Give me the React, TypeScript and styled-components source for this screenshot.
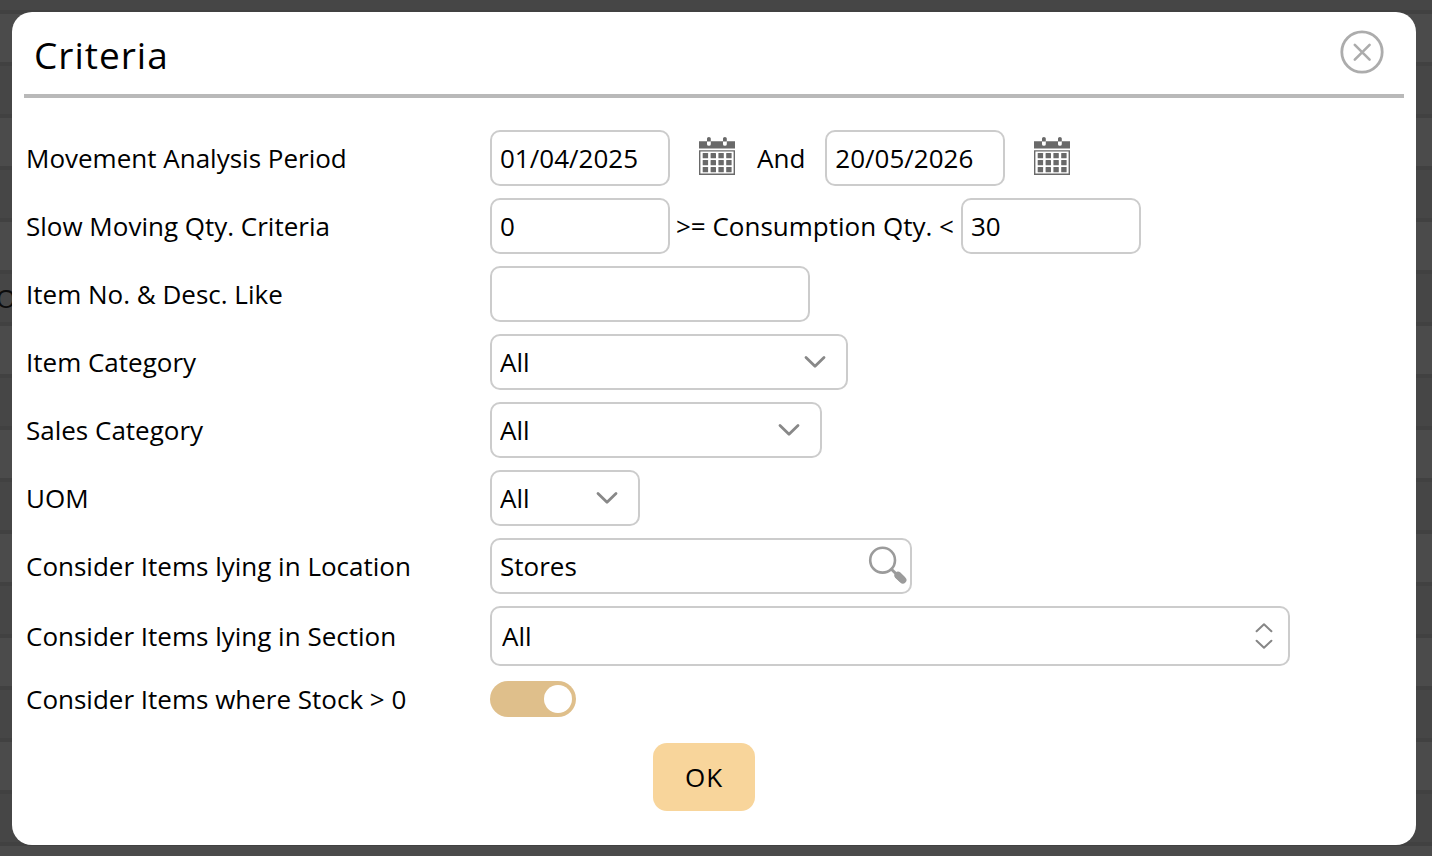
import React from "react";
import styled, { createGlobalStyle } from "styled-components";

const GlobalStyle = createGlobalStyle`
  *, *::before, *::after { box-sizing: border-box; }
  body {
    margin: 0;
    background: #464646;
    color: #000;
    font-family: "Open Sans", sans-serif;
    font-size: 26px;
    line-height: 36px;
  }
  input, select, button {
    font: inherit;
    color: inherit;
    margin: 0;
  }
`;

const Page = styled.div`
  position: relative;
  min-height: 100vh;
  padding: 12px 16px 11px 12px;
`;

const Backdrop = styled.div`
  position: absolute;
  inset: 0;
  overflow: hidden;
`;

const BackdropRow = styled.div`
  height: 52px;
  padding-top: 6px;
  border-bottom: 4px solid #414141;
  background: #464646;
  color: #0c0c0c;
  &:nth-child(even) { background: #4b4b4b; }
  &:first-child { height: 14px; }
`;

const ClippedText = styled.span`
  margin-left: -4px;
`;

const Dialog = styled.section`
  position: relative;
  padding: 0 12px 34px;
  border-radius: 20px;
  background: #fff;
`;

const Header = styled.header`
  display: flex;
  align-items: flex-start;
  justify-content: space-between;
  height: 86px;
  padding: 18px 20px 0 10px;
  border-bottom: 4px solid #b9b9b9;
`;

const Title = styled.h1`
  margin: 0;
  font-size: 37px;
  font-weight: 400;
  line-height: 50px;
  letter-spacing: 1px;
`;

const IconButton = styled.button`
  display: flex;
  padding: 0;
  border: 0;
  background: none;
  cursor: pointer;
`;

const Form = styled.form`
  padding: 32px 22px 0 2px;
`;

const Row = styled.div<{ $height?: number }>`
  display: grid;
  grid-template-columns: 464px 1fr;
  align-items: center;
  min-height: ${(p) => p.$height ?? 56}px;
  margin-bottom: 12px;
`;

const Fields = styled.div`
  display: flex;
  align-items: center;
`;

const TextInput = styled.input<{ $width: number }>`
  width: ${(p) => p.$width}px;
  height: 56px;
  padding: 0 8px;
  border: 2px solid #ccc;
  border-radius: 10px;
  background: #fff;
`;

const DateGroup = styled.div`
  display: flex;
  align-items: center;
  gap: 28px;
`;

const Conjunction = styled.label`
  padding: 0 20px 0 21px;
`;

const Comparison = styled.label`
  padding: 0 7px 0 6px;
`;

const Control = styled.div<{ $width: number; $height?: number }>`
  position: relative;
  width: ${(p) => p.$width}px;
  height: ${(p) => p.$height ?? 56}px;
`;

const Select = styled.select<{ $inset?: number }>`
  appearance: none;
  width: 100%;
  height: 100%;
  padding: 0 56px 0 ${(p) => p.$inset ?? 8}px;
  border: 2px solid #ccc;
  border-radius: 10px;
  background: #fff;
`;

const ControlIcon = styled.span<{ $right: number }>`
  position: absolute;
  top: 0;
  bottom: 0;
  right: ${(p) => p.$right}px;
  display: flex;
  align-items: center;
  pointer-events: none;
`;

const SearchButton = styled(IconButton)`
  position: absolute;
  top: 7px;
  right: 4px;
`;

const Toggle = styled.input`
  appearance: none;
  display: flex;
  align-items: center;
  width: 86px;
  height: 36px;
  padding: 0 4px;
  border-radius: 18px;
  background: #c4c4c4;
  cursor: pointer;
  &::before {
    content: "";
    width: 28px;
    height: 28px;
    border-radius: 50%;
    background: #fff;
  }
  &:checked {
    justify-content: flex-end;
    background: #dfbf8b;
  }
`;

const Actions = styled.div`
  display: flex;
  justify-content: center;
  padding-top: 11px;
`;

const OkButton = styled.button`
  width: 102px;
  height: 68px;
  padding: 0;
  border: 0;
  border-radius: 14px;
  background: #f8d59b;
  letter-spacing: 1px;
  cursor: pointer;
`;

const CloseIcon = () => (
  <svg width="44" height="44" viewBox="0 0 44 44" fill="none" stroke="#acacac" strokeLinecap="round">
    <circle cx="22" cy="22" r="20.2" strokeWidth="2.8" />
    <path d="M14.8 14.8 29.6 29.6M29.6 14.8 14.8 29.6" strokeWidth="2.6" />
  </svg>
);

const CalendarIcon = () => (
  <svg width="38" height="44" viewBox="0 0 38 44">
    <path fill="#696969" d="M1 5.3H37V12.6H1z" />
    <path fill="#fff" d="M9 5H12.8V8.2Q12.8 9.7 10.9 9.7Q9 9.7 9 8.2zM25 5H28.8V8.2Q28.8 9.7 26.9 9.7Q25 9.7 25 8.2z" />
    <path fill="#696969" d="M9 5.5V2.6Q9 1 10.9 1Q12.8 1 12.8 2.6V5.5zM25 5.5V2.6Q25 1 26.9 1Q28.8 1 28.8 2.6V5.5z" />
    <path fill="none" stroke="#696969" strokeWidth="1.4" d="M1.7 14.9H36.3V38.2H1.7z" />
    {[17, 24, 31].map((y) =>
      [4.7, 12.6, 20.4, 28.2].map((x) => (
        <rect key={`${x}-${y}`} x={x} y={y} width="5.4" height="5.2" rx="0.5" fill="#696969" />
      ))
    )}
  </svg>
);

const ChevronIcon = () => (
  <svg width="24" height="14" viewBox="0 0 24 14" fill="none" stroke="#888" strokeWidth="2.8" strokeLinecap="round" strokeLinejoin="round">
    <path d="M3 2.4 12 11.2 21 2.4" />
  </svg>
);

const UpDownIcon = () => (
  <svg width="20" height="28" viewBox="0 0 20 28" fill="none" stroke="#868686" strokeWidth="2" strokeLinecap="round" strokeLinejoin="round">
    <path d="M2.6 9.2 10 2.2 17.4 9.2M2.6 18.8 10 25.8 17.4 18.8" />
  </svg>
);

const SearchIcon = () => (
  <svg width="40" height="40" viewBox="0 0 40 40" fill="none" stroke="#9b9b9b">
    <circle cx="14.6" cy="15.2" r="12.4" strokeWidth="2.6" />
    <path d="M23.2 24 28 28.8" strokeWidth="3" />
    <path d="M29.4 29.8 34.8 35" strokeWidth="7" />
    <path d="M30 30.4 34.8 35" strokeWidth="7.2" strokeLinecap="round" />
  </svg>
);

type DropDownProps = { id: string; width: number };

const DropDown = ({ id, width }: DropDownProps) => (
  <Control $width={width}>
    <Select id={id}>
      <option>All</option>
    </Select>
    <ControlIcon $right={21}>
      <ChevronIcon />
    </ControlIcon>
  </Control>
);

export default function App() {
  return (
    <>
      <GlobalStyle />
      <Page>
        <Backdrop aria-hidden="true">
          {Array.from({ length: 18 }, (_, i) => (
            <BackdropRow key={i}>{i === 6 && <ClippedText>O</ClippedText>}</BackdropRow>
          ))}
        </Backdrop>
        <Dialog role="dialog" aria-labelledby="title">
          <Header>
            <Title id="title">Criteria</Title>
            <IconButton type="button" aria-label="Close">
              <CloseIcon />
            </IconButton>
          </Header>
          <Form onSubmit={(e) => e.preventDefault()}>
            <Row>
              <label htmlFor="from">Movement Analysis Period</label>
              <Fields>
                <DateGroup>
                  <TextInput id="from" $width={180} defaultValue="01/04/2025" />
                  <IconButton type="button" aria-label="Choose start date">
                    <CalendarIcon />
                  </IconButton>
                </DateGroup>
                <Conjunction htmlFor="to">And</Conjunction>
                <DateGroup>
                  <TextInput id="to" $width={180} defaultValue="20/05/2026" />
                  <IconButton type="button" aria-label="Choose end date">
                    <CalendarIcon />
                  </IconButton>
                </DateGroup>
              </Fields>
            </Row>
            <Row>
              <label htmlFor="min">Slow Moving Qty. Criteria</label>
              <Fields>
                <TextInput id="min" $width={180} defaultValue="0" />
                <Comparison htmlFor="max">&gt;= Consumption Qty. &lt;</Comparison>
                <TextInput id="max" $width={180} defaultValue="30" />
              </Fields>
            </Row>
            <Row>
              <label htmlFor="item">Item No. &amp; Desc. Like</label>
              <TextInput id="item" $width={320} />
            </Row>
            <Row>
              <label htmlFor="category">Item Category</label>
              <DropDown id="category" width={358} />
            </Row>
            <Row>
              <label htmlFor="sales">Sales Category</label>
              <DropDown id="sales" width={332} />
            </Row>
            <Row>
              <label htmlFor="uom">UOM</label>
              <DropDown id="uom" width={150} />
            </Row>
            <Row>
              <label htmlFor="location">Consider Items lying in Location</label>
              <Control $width={422}>
                <TextInput id="location" $width={422} defaultValue="Stores" />
                <SearchButton type="button" aria-label="Search locations">
                  <SearchIcon />
                </SearchButton>
              </Control>
            </Row>
            <Row $height={60}>
              <label htmlFor="section">Consider Items lying in Section</label>
              <Control $width={800} $height={60}>
                <Select id="section" $inset={10}>
                  <option>All</option>
                </Select>
                <ControlIcon $right={16}>
                  <UpDownIcon />
                </ControlIcon>
              </Control>
            </Row>
            <Row $height={42}>
              <label htmlFor="stock">Consider Items where Stock &gt; 0</label>
              <Toggle id="stock" type="checkbox" role="switch" defaultChecked />
            </Row>
            <Actions>
              <OkButton type="submit">OK</OkButton>
            </Actions>
          </Form>
        </Dialog>
      </Page>
    </>
  );
}
